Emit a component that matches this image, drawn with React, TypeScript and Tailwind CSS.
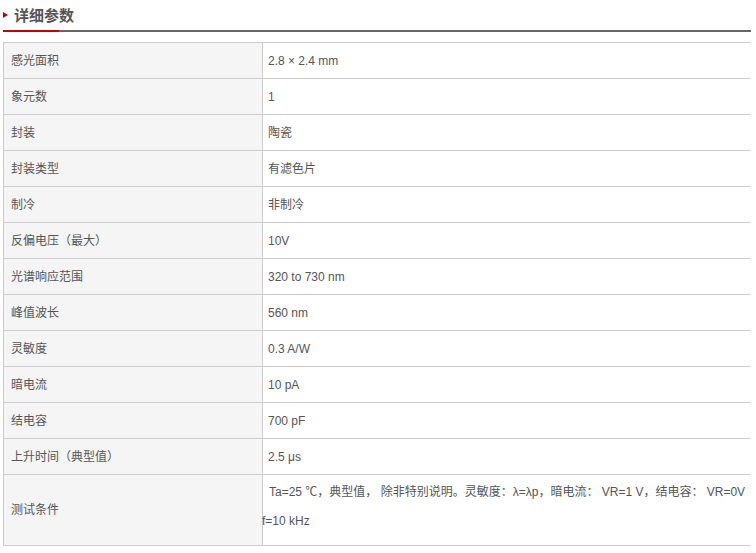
const rows: [string, string][] = [
  ["感光面积", "2.8 × 2.4 mm"],
  ["象元数", "1"],
  ["封装", "陶瓷"],
  ["封装类型", "有滤色片"],
  ["制冷", "非制冷"],
  ["反偏电压（最大）", "10V"],
  ["光谱响应范围", "320 to 730 nm"],
  ["峰值波长", "560 nm"],
  ["灵敏度", "0.3 A/W"],
  ["暗电流", "10 pA"],
  ["结电容", "700 pF"],
  ["上升时间（典型值）", "2.5 μs"],
];

const App = () => {
  return (
    <div className="w-[756px] h-[553px] bg-white text-[#555] font-['Liberation_Sans','Noto_Sans_CJK_SC',sans-serif]">
      {/* title */}
      <div className="h-[30px] flex items-center pl-[3px]">
        <span className="w-0 h-0 border-y-[3.5px] border-y-transparent border-l-[5px] border-l-[#c00000]" />
        <h2 className="ml-[6px] text-[15px] font-bold leading-none text-[#555]">详细参数</h2>
      </div>
      <div className="ml-[3px] w-[748px] h-[2px] bg-[#666] flex">
        <div className="w-[56px] h-full bg-[#c00000]" />
      </div>

      {/* params table */}
      <div className="mt-[10px] ml-[3px] w-[748px] border-t border-l border-[#cccccc] text-[12px]">
        {rows.map(([k, v]) => (
          <div key={k} className="flex h-[36px] border-b border-[#cccccc]">
            <div className="w-[259px] flex items-center pl-[7px] bg-[#f5f5f5] border-r border-[#cccccc]">{k}</div>
            <div className="flex-1 flex items-center pl-[5px]">{v}</div>
          </div>
        ))}
        <div className="flex h-[71px] border-b border-[#cccccc]">
          <div className="w-[259px] flex items-center pl-[7px] bg-[#f5f5f5] border-r border-[#cccccc]">测试条件</div>
          <div className="flex-1 pt-[3px] leading-[29px]">
            <p className="pl-[6px] whitespace-nowrap">
              Ta=25 ℃，典型值， 除非特别说明。灵敏度：λ=λp，暗电流： VR=1 V，结电容： VR=0V
            </p>
            <p className="-ml-px">f=10 kHz</p>
          </div>
        </div>
      </div>
    </div>
  );
};

export default App;
